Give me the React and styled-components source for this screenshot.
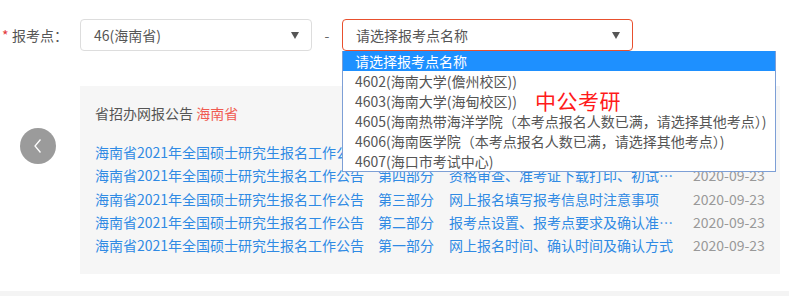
import React from 'react';
import styled, { createGlobalStyle } from 'styled-components';

const GlobalStyle = createGlobalStyle`
    body {
        margin: 0;
        background: #fff;
        font-family: "Noto Sans CJK SC", "Noto Sans", sans-serif;
        font-size: 14px;
        color: #555;
    }
`;

const Page = styled.div`
    position: relative;
    width: 789px;
    height: 296px;
    overflow: hidden;
`;

const FormRow = styled.div`
    display: flex;
    align-items: center;
    padding-top: 19px;
    height: 32px;
`;

const Label = styled.label`
    width: 80px;
    box-sizing: border-box;
    padding-left: 2px;
    display: flex;
    align-items: center;
    color: #555;
`;

const Star = styled.span`
    color: #e4393c;
    width: 10px;
    font-size: 14px;
`;

const SelectWrap = styled.div`
    position: relative;
    width: ${props => props.width}px;
`;

const SelectBox = styled.div`
    box-sizing: border-box;
    height: 32px;
    border: 1px solid ${props => (props.active ? '#e8502e' : '#ddd')};
    border-radius: 4px;
    padding: 0 12px 0 13px;
    display: flex;
    align-items: center;
    justify-content: space-between;
    color: #555;
    background: #fff;
`;

const Arrow = styled.span`
    width: 0;
    height: 0;
    border-left: 4px solid transparent;
    border-right: 4px solid transparent;
    border-top: 7px solid #555;
`;

const Dash = styled.span`
    width: 30px;
    text-align: center;
    color: #666;
`;

const Dropdown = styled.ul`
    position: absolute;
    top: 32px;
    left: 0;
    width: 434px;
    box-sizing: border-box;
    margin: 0;
    padding: 0;
    list-style: none;
    background: #fff;
    border: 1px solid #7d9fd6;
    border-top: none;
    z-index: 5;
`;

const Option = styled.li`
    height: 20px;
    line-height: 20px;
    padding-left: 12px;
    white-space: nowrap;
    color: ${props => (props.selected ? '#fff' : '#555')};
    background: ${props => (props.selected ? '#1e90ff' : '#fff')};
`;

const Watermark = styled.div`
    position: absolute;
    left: 535px;
    top: 85px;
    font-size: 21px;
    color: #ff1a1a;
    letter-spacing: 0.5px;
    z-index: 6;
`;

const Body = styled.div`
    display: flex;
    margin-top: 35px;
`;

const Side = styled.div`
    width: 80px;
    display: flex;
    justify-content: center;
    align-items: flex-start;
    padding-top: 42px;
    box-sizing: border-box;
    padding-right: 4px;
`;

const CircleButton = styled.button`
    width: 36px;
    height: 36px;
    border-radius: 50%;
    border: none;
    background: #9b9b9b;
    display: flex;
    align-items: center;
    justify-content: center;
    padding: 0;
`;

const Panel = styled.div`
    width: 700px;
    box-sizing: border-box;
    background: #f6f6f6;
    padding: 17px 15px 17px 15px;
`;

const PanelTitle = styled.div`
    line-height: 20px;
    color: #555;
    margin-bottom: 18px;
`;

const Province = styled.span`
    color: #f05a50;
`;

const NewsRow = styled.div`
    display: grid;
    grid-template-columns: 283px 71px 244px auto;
    line-height: 23.3px;
    white-space: nowrap;
`;

const Link = styled.a`
    color: #2f8ae4;
    text-decoration: none;
    overflow: hidden;
    text-overflow: ellipsis;
    padding-right: ${props => props.pad || 0}px;
`;

const Date = styled.span`
    color: #999;
`;

const Footer = styled.div`
    margin-top: 17px;
    height: 10px;
    background: #f4f4f4;
`;

const options = [
    '请选择报考点名称',
    '4602(海南大学(儋州校区))',
    '4603(海南大学(海甸校区))',
    '4605(海南热带海洋学院（本考点报名人数已满，请选择其他考点）)',
    '4606(海南医学院（本考点报名人数已满，请选择其他考点）)',
    '4607(海口市考试中心)',
];

const news = [
    { part: '第五部分', desc: '其他注意事项' },
    { part: '第四部分', desc: '资格审查、准考证下载打印、初试相关要求' },
    { part: '第三部分', desc: '网上报名填写报考信息时注意事项' },
    { part: '第二部分', desc: '报考点设置、报考点要求及确认准考证相关说明' },
    { part: '第一部分', desc: '网上报名时间、确认时间及确认方式' },
];

const App = () => (
    <Page>
        <GlobalStyle />
        <FormRow>
            <Label><Star>*</Star>报考点：</Label>
            <SelectWrap width={232}>
                <SelectBox>
                    <span>46(海南省)</span>
                    <Arrow />
                </SelectBox>
            </SelectWrap>
            <Dash>-</Dash>
            <SelectWrap width={291}>
                <SelectBox active>
                    <span>请选择报考点名称</span>
                    <Arrow />
                </SelectBox>
                <Dropdown>
                    {options.map((o, i) => (
                        <Option key={o} selected={i === 0}>{o}</Option>
                    ))}
                </Dropdown>
            </SelectWrap>
        </FormRow>
        <Watermark>中公考研</Watermark>
        <Body>
            <Side>
                <CircleButton>
                    <svg width="10" height="16" viewBox="0 0 10 16">
                        <polyline points="7.5,1.5 2,8 7.5,14.5" fill="none" stroke="#fff" strokeWidth="1.3" />
                    </svg>
                </CircleButton>
            </Side>
            <Panel>
                <PanelTitle>省招办网报公告 <Province>海南省</Province></PanelTitle>
                {news.map(n => (
                    <NewsRow key={n.part}>
                        <Link>海南省2021年全国硕士研究生报名工作公告</Link>
                        <Link>{n.part}</Link>
                        <Link pad={20}>{n.desc}</Link>
                        <Date>2020-09-23</Date>
                    </NewsRow>
                ))}
            </Panel>
        </Body>
        <Footer />
    </Page>
);

export default App;
